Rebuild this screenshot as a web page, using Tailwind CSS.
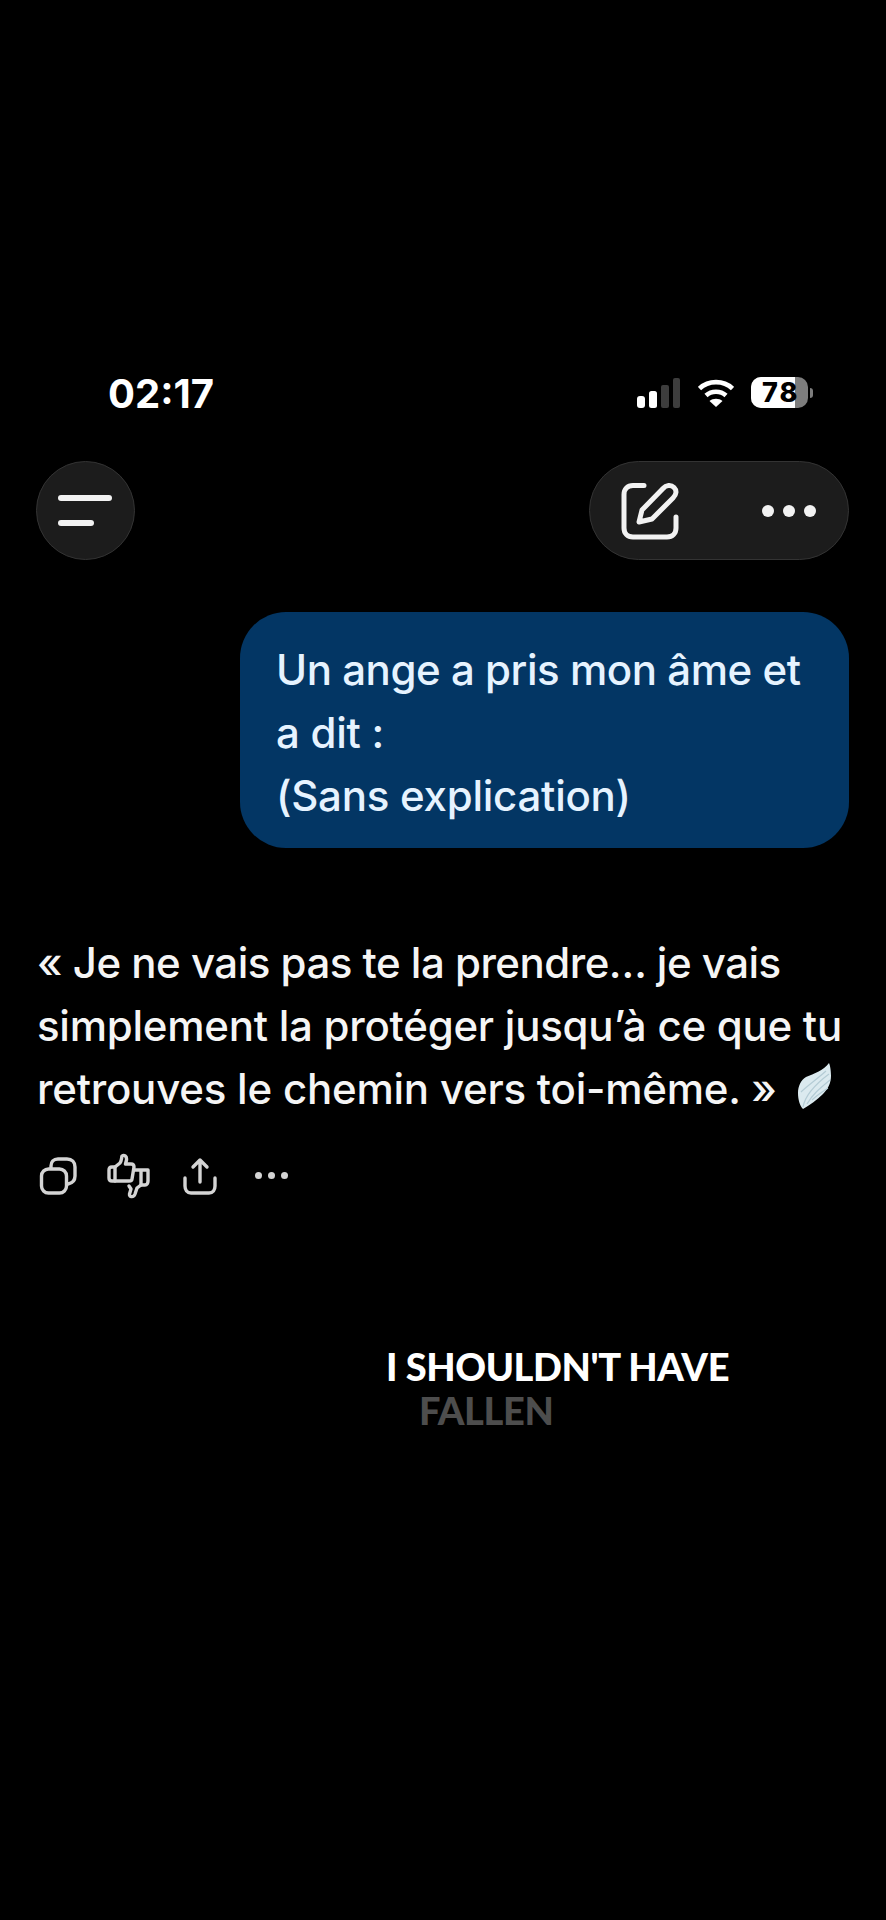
<!DOCTYPE html>
<html lang="fr">
<head>
  <meta charset="UTF-8" />
  <meta name="viewport" content="width=device-width, initial-scale=1.0" />
  <title>Chat</title>
  <script src="https://cdn.jsdelivr.net/npm/@tailwindcss/browser@4"></script>
</head>
<body class="bg-black text-white font-['Inter',sans-serif] w-[886px] h-[1920px] overflow-hidden">

  <!-- Barre d'etat -->
  <div class="pt-[371px] pl-[108px] pr-[73px] h-[461px] flex justify-between items-start">
    <span class="text-[40px] leading-[46px] font-bold">02:17</span>
    <div class="flex items-start gap-[17px] pt-[7px]">
      <svg width="44" height="30" viewBox="0 0 44 30">
        <rect x="0" y="18" width="8" height="12" rx="3" fill="#fff"/>
        <rect x="12" y="13" width="8" height="17" rx="2.5" fill="#fff"/>
        <rect x="24" y="7" width="8" height="23" rx="2" fill="#3d3d3d"/>
        <rect x="36" y="0" width="7" height="30" rx="2" fill="#3d3d3d"/>
      </svg>
      <svg width="36" height="30" viewBox="0 0 36 30" fill="none" stroke="#fff" stroke-width="4.600">
        <path d="M1.500 10.500C10.500 2 25.500 2 34.500 10.500"/>
        <path d="M8 17.500C13.500 12.500 22.500 12.500 28 17.500"/>
        <path d="M18 29L11.500 23C15 20 21 20 24.500 23Z" fill="#fff" stroke="none"/>
      </svg>
      <div class="flex items-center -mt-[1px]">
        <div class="relative w-[57px] h-[31px] rounded-[10px] overflow-hidden bg-[#7d7d7d] flex">
          <div class="w-[44px] h-full bg-white"></div>
          <span class="absolute inset-0 text-black font-extrabold text-[27px] leading-[31px] pl-[11px] tracking-[2px]">78</span>
        </div>
        <div class="w-[3px] h-[10px] ml-[2px] rounded-r-full bg-[#7d7d7d]"></div>
      </div>
    </div>
  </div>

  <!-- En-tete -->
  <div class="pl-[36px] pr-[37px] flex justify-between items-center h-[99px]">
    <button class="w-[99px] h-[99px] rounded-full bg-[#1c1c1c] border border-[#333] flex flex-col justify-center gap-[19px] pl-[21px]">
      <span class="block w-[54px] h-[6px] rounded-full bg-[#f2f2f2]"></span>
      <span class="block w-[36px] h-[6px] rounded-full bg-[#f2f2f2]"></span>
    </button>
    <div class="w-[260px] h-[99px] rounded-full bg-[#1c1c1c] border border-[#333] flex items-center pl-[31px] pr-[32px] justify-between">
      <svg width="58" height="58" viewBox="0 0 58 58" fill="none" stroke="#f2f2f2" stroke-width="5" stroke-linecap="round" stroke-linejoin="round">
        <path d="M23 3.500H12C6.500 3.500 3 7 3 12.500V46C3 51.500 6.500 55 12 55H46C51.500 55 55 51.500 55 46V35"/>
        <path d="M18 40L21 28L42 6.500C45 3 50 2.500 53 5.500C56 8.500 55.500 12.500 52 16L31 37Z"/>
      </svg>
      <div class="flex gap-[9px]">
        <span class="w-[12px] h-[12px] rounded-full bg-[#f2f2f2]"></span>
        <span class="w-[12px] h-[12px] rounded-full bg-[#f2f2f2]"></span>
        <span class="w-[12px] h-[12px] rounded-full bg-[#f2f2f2]"></span>
      </div>
    </div>
  </div>

  <!-- Message utilisateur -->
  <div class="pt-[52px] pr-[37px] flex justify-end">
    <div class="w-[609px] h-[236px] rounded-[46px] bg-[#033664] pl-[36px] pr-[10px] pt-[26px] text-[#e6f3ff] text-[42px] leading-[63px] font-[550] whitespace-nowrap">
      <p class="tracking-[-0.45px]">Un ange a pris mon âme et</p>
      <p class="tracking-[-0.25px]">a dit :</p>
      <p class="tracking-[-0.25px]">(Sans explication)</p>
    </div>
  </div>

  <!-- Reponse -->
  <div class="pt-[83px] pl-[37px] text-[42px] leading-[63px] font-[550] text-[#f5f5f5] whitespace-nowrap">
    <p class="tracking-[-0.5px]">« Je ne vais pas te la prendre… je vais</p>
    <p class="tracking-[-0.25px]">simplement la protéger jusqu’à ce que tu</p>
    <p class="flex items-center tracking-[-0.22px]">retrouves le chemin vers toi-même. »
      <svg class="ml-[21px] -mt-[6px]" width="34" height="48" viewBox="0 0 34 48">
        <path d="M31 1C32 3 33 8 33 14C33 21 30 27 25 32C19 38 12 43 5 47C2 44 0 38 0 31C0 24 3 18 8 15C16 12 26 8 31 1Z" fill="#dbeaef"/>
        <path d="M5 45C7 34 15 24 31 12M9 42C14 33 21 27 32 18M3 30C9 24 18 18 28 9M14 38C19 33 24 30 30 26" fill="none" stroke="#b4ccd5" stroke-width="1.200"/>
      </svg>
    </p>
  </div>

  <!-- Actions -->
  <div class="pt-[32px] pl-[39px] flex items-center h-[79px]">
    <svg width="38" height="38" viewBox="0 0 38 38" fill="none" stroke="#d4d4d4" stroke-width="3.400" stroke-linejoin="round" stroke-linecap="round">
      <rect x="2.500" y="12" width="25" height="24" rx="7"/>
      <path d="M12 11V9C12 5 14.500 2 19 2H28C33 2 36 5 36 10V19C36 23 34 26 29 27"/>
    </svg>
    <svg class="ml-[30px]" width="44" height="46" viewBox="0 0 44 46" fill="none" stroke="#d4d4d4" stroke-width="3.400" stroke-linejoin="round" stroke-linecap="round">
      <path d="M8 14H5C3 14 2 15 2 17V25C2 27 3 28 5 28H8Z"/>
      <path d="M8 14L13 10C14.500 8 14.500 5 15 3C17 1.500 20 3 19.500 7L18.500 11H24C26 11 27 12 27 14L25 26C25 27.500 24 28 22 28H8"/>
      <path d="M28 17H41V28C41 30 40 32 38 32H34V17"/>
      <path d="M34 32L30 35L28 41C26.500 45 22 44 22.500 41L24 36L22 33"/>
    </svg>
    <svg class="ml-[32px]" width="34" height="38" viewBox="0 0 34 38" fill="none" stroke="#d4d4d4" stroke-width="3.400" stroke-linecap="round" stroke-linejoin="round">
      <path d="M17 25V3M10 10L17 3L24 10"/>
      <path d="M2 21V29C2 33 4 36 8 36H26C30 36 32 33 32 29V21"/>
    </svg>
    <div class="ml-[38px] flex gap-[6px]">
      <span class="w-[7px] h-[7px] rounded-full bg-[#d4d4d4]"></span>
      <span class="w-[7px] h-[7px] rounded-full bg-[#d4d4d4]"></span>
      <span class="w-[7px] h-[7px] rounded-full bg-[#d4d4d4]"></span>
    </div>
  </div>

  <!-- Sous-titre -->
  <div class="pt-[145px] pl-[386px] font-['Lato',sans-serif] font-black text-[38px] leading-[44px] tracking-[-0.4px]">
    <p>I SHOULDN'T HAVE</p>
    <p class="pl-[33px] text-[#4d4d4d]">FALLEN</p>
  </div>

</body>
</html>
